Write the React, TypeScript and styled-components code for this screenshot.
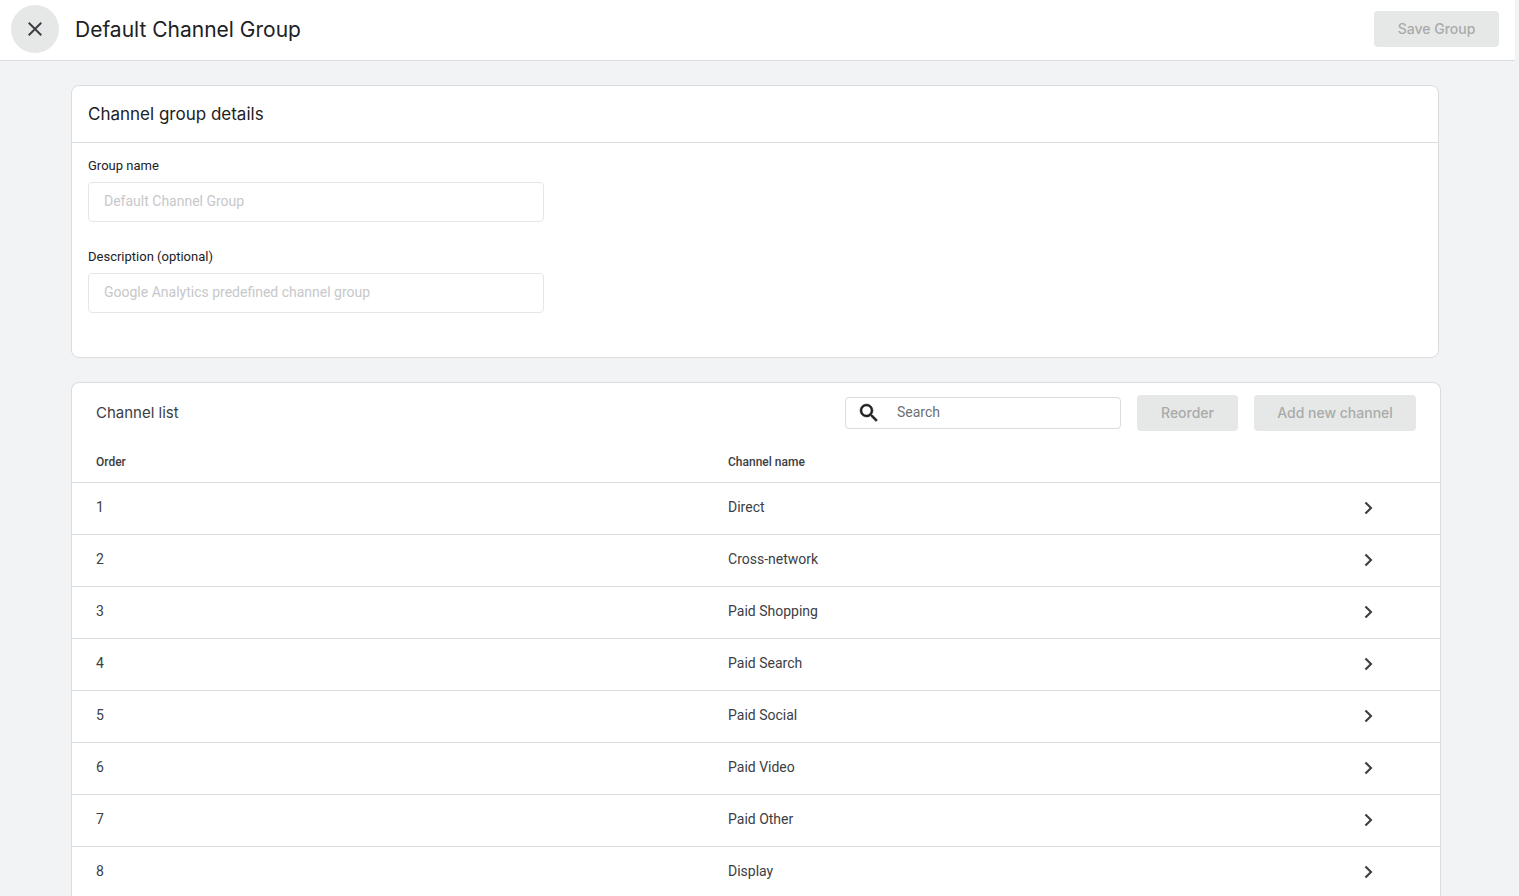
import React, { useState } from "react";
import styled, { createGlobalStyle } from "styled-components";

const bodyFont = `Roboto, "Liberation Sans", sans-serif`;
const displayFont = `"Google Sans", Inter, "Open Sans", sans-serif`;

const GlobalStyle = createGlobalStyle`
  *, *::before, *::after { box-sizing: border-box; }
  body { margin: 0; background: #f1f3f4; color: #202124; font-family: ${bodyFont}; font-size: 14px; }
`;

const Page = styled.div`
  display: flex;
  flex-direction: column;
  height: 100vh;
  overflow: hidden;
  padding-right: 4px;
`;

const Header = styled.header`
  display: flex;
  flex: none;
  align-items: center;
  height: 61px;
  padding: 0 16px 3px 11px;
  border-bottom: 1px solid #dadce0;
  background: #fff;
`;

const CloseButton = styled.button`
  display: flex;
  flex: none;
  align-items: center;
  justify-content: center;
  width: 48px;
  height: 48px;
  margin-right: 16px;
  padding: 0;
  border: 0;
  border-radius: 50%;
  background: #e6e8e7;
  color: #3c4043;
  cursor: pointer;
`;

const PageTitle = styled.h1`
  flex: 1;
  margin: 0;
  padding-top: 2px;
  font: 400 21px/28px ${displayFont};
`;

const ActionButton = styled.button<{ $width: number }>`
  flex: none;
  width: ${(p) => p.$width}px;
  height: 36px;
  padding: 0;
  border: 0;
  border-radius: 4px;
  background: #e6e8e7;
  color: #a9abaa;
  font: 500 14px/20px ${displayFont};
`;

const Main = styled.main`
  display: flex;
  flex: 1;
  flex-direction: column;
  gap: 24px;
  min-height: 0;
  padding: 24px 74px 0 71px;
  overflow: auto;
  scrollbar-width: none;
`;

const Card = styled.section`
  flex: none;
  border: 1px solid #dadce0;
  border-radius: 8px;
  background: #fff;
`;

const DetailsCard = styled(Card)`
  margin-right: 2px;
`;

const ListCard = styled(Card)`
  border-bottom: 0;
  border-radius: 8px 8px 0 0;
`;

const DetailsTitle = styled.h2`
  margin: 0;
  padding: 14px 16px;
  border-bottom: 1px solid #dadce0;
  font: 400 17px/28px ${displayFont};
`;

const Fields = styled.form`
  display: flex;
  flex-direction: column;
  gap: 25px;
  padding: 13px 16px 44px;
`;

const Field = styled.div`
  display: flex;
  flex-direction: column;
  gap: 6px;
  max-width: 456px;
`;

const FieldLabel = styled.label`
  font-size: 13px;
  line-height: 20px;
`;

const FieldInput = styled.input`
  width: 100%;
  height: 40px;
  padding: 0 15px 2px;
  border: 1px solid #e4e6e8;
  border-radius: 4px;
  background: #fff;
  color: #c7c8c9;
  font: 400 14px/20px ${bodyFont};
`;

const Toolbar = styled.div`
  display: flex;
  align-items: center;
  gap: 16px;
  padding: 12px 24px;
`;

const ListTitle = styled.h2`
  flex: 1;
  margin: 0;
  color: #3c4043;
  font: 400 15px/24px ${displayFont};
`;

const SearchBox = styled.label`
  display: flex;
  align-items: center;
  gap: 16px;
  width: 276px;
  height: 32px;
  padding: 0 11px;
  border: 1px solid #dadce0;
  border-radius: 4px;
  color: #202124;
`;

const SearchInput = styled.input`
  flex: 1;
  min-width: 0;
  padding: 0 0 2px;
  border: 0;
  outline: 0;
  background: none;
  color: #202124;
  font: 400 14px/20px ${bodyFont};

  &::placeholder { color: #6c7075; opacity: 1; }
`;

const Table = styled.table`
  width: 100%;
  border-collapse: separate;
  border-spacing: 0;
  table-layout: fixed;
  color: #3c4043;
`;

const Column = styled.col<{ $width?: string }>`
  width: ${(p) => p.$width ?? "auto"};
`;

const HeadCell = styled.th`
  height: 40px;
  padding: 0 0 2px 24px;
  border-bottom: 1px solid #dadce0;
  font-size: 12px;
  font-weight: 500;
  line-height: 16px;
  text-align: left;
`;

const Cell = styled.td`
  height: 52px;
  padding: 0 0 4px 24px;
  border-bottom: 1px solid #dadce0;
  line-height: 20px;
`;

const ArrowCell = styled(Cell)`
  padding: 0 60px 2px 0;
`;

const RowButton = styled.button`
  display: block;
  width: 24px;
  height: 24px;
  margin-left: auto;
  padding: 0;
  border: 0;
  background: none;
  color: #3c4043;
  cursor: pointer;
`;

const Icon = ({ d, stroke = 0 }: { d: string; stroke?: number }) => (
  <svg
    width={24}
    height={24}
    viewBox="0 0 24 24"
    fill="currentColor"
    stroke="currentColor"
    strokeWidth={stroke}
    aria-hidden="true"
  >
    <path d={d} />
  </svg>
);

const CLOSE = "M19 6.41 17.59 5 12 10.59 6.41 5 5 6.41 10.59 12 5 17.59 6.41 19 12 13.41 17.59 19 19 17.59 13.41 12z";
const SEARCH =
  "M15.5 14h-.79l-.28-.27A6.471 6.471 0 0 0 16 9.5 6.5 6.5 0 1 0 9.5 16c1.61 0 3.09-.59 4.23-1.57l.27.28v.79l5 4.99L20.49 19l-4.99-5zm-6 0C7.01 14 5 11.99 5 9.5S7.01 5 9.5 5 14 7.01 14 9.5 11.99 14 9.5 14z";
const CHEVRON = "M10.2 5.7 8.7 7.2 13.5 12l-4.8 4.8 1.5 1.5 6.3-6.3z";

const channels = [
  "Direct",
  "Cross-network",
  "Paid Shopping",
  "Paid Search",
  "Paid Social",
  "Paid Video",
  "Paid Other",
  "Display",
];

export default function App() {
  const [query, setQuery] = useState("");
  const rows = channels
    .map((name, i) => ({ name, order: i + 1 }))
    .filter((row) => row.name.toLowerCase().includes(query.toLowerCase()));

  return (
    <>
      <GlobalStyle />
      <Page>
        <Header>
          <CloseButton type="button" aria-label="Close">
            <Icon d={CLOSE} />
          </CloseButton>
          <PageTitle>Default Channel Group</PageTitle>
          <ActionButton type="button" disabled $width={125}>Save Group</ActionButton>
        </Header>
        <Main>
          <DetailsCard>
            <DetailsTitle>Channel group details</DetailsTitle>
            <Fields>
              <Field>
                <FieldLabel htmlFor="group-name">Group name</FieldLabel>
                <FieldInput id="group-name" disabled defaultValue="Default Channel Group" />
              </Field>
              <Field>
                <FieldLabel htmlFor="description">Description (optional)</FieldLabel>
                <FieldInput id="description" disabled defaultValue="Google Analytics predefined channel group" />
              </Field>
            </Fields>
          </DetailsCard>
          <ListCard>
            <Toolbar>
              <ListTitle>Channel list</ListTitle>
              <SearchBox>
                <Icon d={SEARCH} stroke={0.5} />
                <SearchInput
                  aria-label="Search"
                  placeholder="Search"
                  value={query}
                  onChange={(e) => setQuery(e.target.value)}
                />
              </SearchBox>
              <ActionButton type="button" disabled $width={101}>Reorder</ActionButton>
              <ActionButton type="button" disabled $width={162}>Add new channel</ActionButton>
            </Toolbar>
            <Table>
              <colgroup>
                <Column $width="46.2%" />
                <Column />
                <Column $width="108px" />
              </colgroup>
              <thead>
                <tr>
                  <HeadCell scope="col">Order</HeadCell>
                  <HeadCell scope="col">Channel name</HeadCell>
                  <HeadCell aria-label="Open" />
                </tr>
              </thead>
              <tbody>
                {rows.map((row) => (
                  <tr key={row.order}>
                    <Cell>{row.order}</Cell>
                    <Cell>{row.name}</Cell>
                    <ArrowCell>
                      <RowButton type="button" aria-label={`Open ${row.name}`}>
                        <Icon d={CHEVRON} />
                      </RowButton>
                    </ArrowCell>
                  </tr>
                ))}
              </tbody>
            </Table>
          </ListCard>
        </Main>
      </Page>
    </>
  );
}
